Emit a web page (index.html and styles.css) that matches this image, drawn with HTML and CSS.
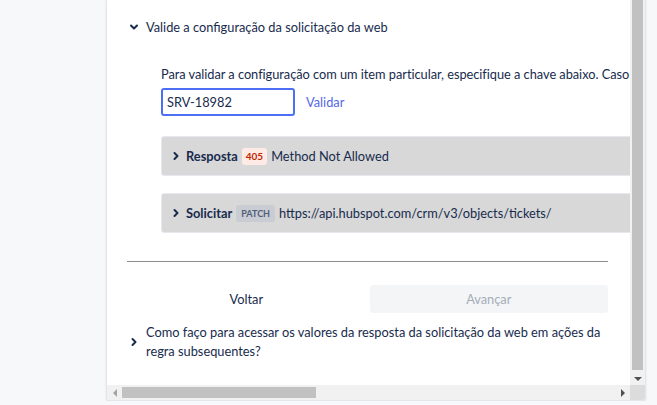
FILE: index.html
```html
<!DOCTYPE html>
<html lang="pt-BR">
<head>
    <meta charset="UTF-8">
    <meta name="viewport" content="width=device-width, initial-scale=1.0">
    <title>Solicitação da web</title>
    <link rel="stylesheet" href="styles.css">
</head>
<body>

    <div class="panel">
        <div class="viewport">
            <div class="content">
                <div class="section-toggle">
                    <svg class="chev" width="12" height="12" viewBox="0 0 12 12"><path d="M3 4.5 L6 7.5 L9 4.5" /></svg>
                    <span>Valide a configuração da solicitação da web</span>
                </div>

                <div class="validate">
                    <p class="hint">Para validar a configuração com um item particular, especifique a chave abaixo. Caso</p>
                    <div class="key-row">
                        <input type="text" class="key-input" value="SRV-18982">
                        <a href="#" class="link">Validar</a>
                    </div>

                    <div class="result">
                        <svg class="chev" width="12" height="12" viewBox="0 0 12 12"><path d="M4.5 3 L7.5 6 L4.5 9" /></svg>
                        <strong>Resposta</strong>
                        <span class="badge badge-error">405</span>
                        <span>Method Not Allowed</span>
                    </div>

                    <div class="result">
                        <svg class="chev" width="12" height="12" viewBox="0 0 12 12"><path d="M4.5 3 L7.5 6 L4.5 9" /></svg>
                        <strong>Solicitar</strong>
                        <span class="badge badge-method">PATCH</span>
                        <span>https://api.hubspot.com/crm/v3/objects/tickets/</span>
                    </div>
                </div>

                <hr class="divider">

                <div class="actions">
                    <button type="button" class="btn">Voltar</button>
                    <button type="button" class="btn btn-primary" disabled>Avançar</button>
                </div>

                <div class="faq">
                    <svg class="chev" width="12" height="12" viewBox="0 0 12 12"><path d="M4.5 3 L7.5 6 L4.5 9" /></svg>
                    <span>Como faço para acessar os valores da resposta da solicitação da web em ações da regra subsequentes?</span>
                </div>
            </div>
        </div>

        <div class="vscroll">
            <div class="vthumb"></div>
            <div class="arrow arrow-down"></div>
        </div>
        <div class="hscroll">
            <div class="arrow arrow-left"></div>
            <div class="htrack"><div class="hthumb"></div></div>
            <div class="arrow arrow-right"></div>
        </div>
        <div class="corner"></div>
    </div>

</body>
</html>
```

FILE: styles.css
```css
body {
    margin: 0;
    background: #f7f8f9;
    font-family: Lato, "Noto Sans", sans-serif;
    font-size: 12.8px;
    color: #172b4d;
}
.panel {
    width: 538px;
    height: 400px;
    margin-left: 106px;
    background: #fff;
    border: 1px solid #e3e5e9;
    border-top: none;
    border-radius: 0 0 4px 4px;
    box-shadow: 0 1px 2px rgba(9, 30, 66, 0.12);
    display: grid;
    grid-template-columns: 523px 15px;
    grid-template-rows: 385px 15px;
    overflow: hidden;
}
.viewport {
    overflow: hidden;
}
.content {
    width: 481px;
    padding: 17px 22px 0 20px;
}
.chev {
    flex: none;
}
.chev path {
    fill: none;
    stroke: #172b4d;
    stroke-width: 2;
    stroke-linecap: round;
    stroke-linejoin: round;
}
.section-toggle {
    display: flex;
    align-items: center;
    gap: 6px;
    line-height: 20px;
    padding-left: 1px;
}
.validate {
    margin-left: 34px;
    width: 520px;
    margin-top: 27px;
}
.hint {
    margin: 0;
    line-height: 20px;
    white-space: nowrap;
    letter-spacing: -0.035px;
}
.key-row {
    display: flex;
    align-items: center;
    gap: 11px;
    margin-top: 4px;
}
.key-input {
    width: 134px;
    height: 28px;
    box-sizing: border-box;
    border: 2px solid #4c6ff5;
    border-radius: 3px;
    padding: 0 4px;
    font: inherit;
    color: #172b4d;
    outline: none;
}
.link {
    color: #5468e6;
    text-decoration: none;
}
.result {
    display: flex;
    align-items: center;
    gap: 4px;
    height: 40px;
    box-sizing: border-box;
    margin-top: 20px;
    padding-left: 8px;
    background: #d8d8d8;
    border: 1px solid #e6e8ee;
    border-radius: 3px;
    white-space: nowrap;
}
.result + .result {
    margin-top: 17px;
}
.result strong {
    font-weight: 700;
}
.badge {
    font-size: 10px;
    font-weight: 700;
    line-height: 17px;
    padding: 0 4px;
    border-radius: 3px;
}
.badge-error {
    background: #ffebe6;
    color: #bf2600;
}
.badge-method {
    background: #c9ccd2;
    color: #505f79;
    font-size: 9px;
    padding: 0 5px;
}
.divider {
    border: none;
    border-top: 1px solid #8c8c8c;
    margin: 28px 0 0;
}
.actions {
    display: grid;
    grid-template-columns: 1fr 1fr;
    gap: 4px;
    margin-top: 23px;
}
.btn {
    height: 28px;
    border: none;
    border-radius: 3px;
    background: none;
    font: inherit;
    color: #172b4d;
    cursor: pointer;
}
.btn-primary:disabled {
    background: #f4f5f7;
    color: #a5adba;
    cursor: default;
}
.faq {
    display: flex;
    align-items: center;
    gap: 6px;
    margin-top: 10px;
    line-height: 19px;
    padding-left: 1px;
}
.vscroll {
    background: #f1f1f1;
    display: flex;
    flex-direction: column;
}
.vthumb {
    flex: 1;
    margin: 0 2px;
    background: #c1c1c1;
}
.arrow {
    width: 15px;
    height: 15px;
    flex: none;
    position: relative;
}
.arrow::after {
    content: "";
    position: absolute;
    left: 50%;
    top: 50%;
    border: 4px solid transparent;
}
.arrow-down::after {
    border-top: 4px solid #505050;
    border-bottom: none;
    transform: translate(-50%, -25%);
}
.arrow-left::after {
    border-right: 4px solid #a3a3a3;
    border-left: none;
    transform: translate(-50%, -50%);
}
.arrow-right::after {
    border-left: 4px solid #505050;
    border-right: none;
    transform: translate(-50%, -50%);
}
.hscroll {
    background: #f1f1f1;
    display: flex;
}
.htrack {
    flex: 1;
    display: flex;
    padding: 2px 0;
}
.hthumb {
    width: 194px;
    background: #c1c1c1;
}
.corner {
    background: #dcdcdc;
}
```
